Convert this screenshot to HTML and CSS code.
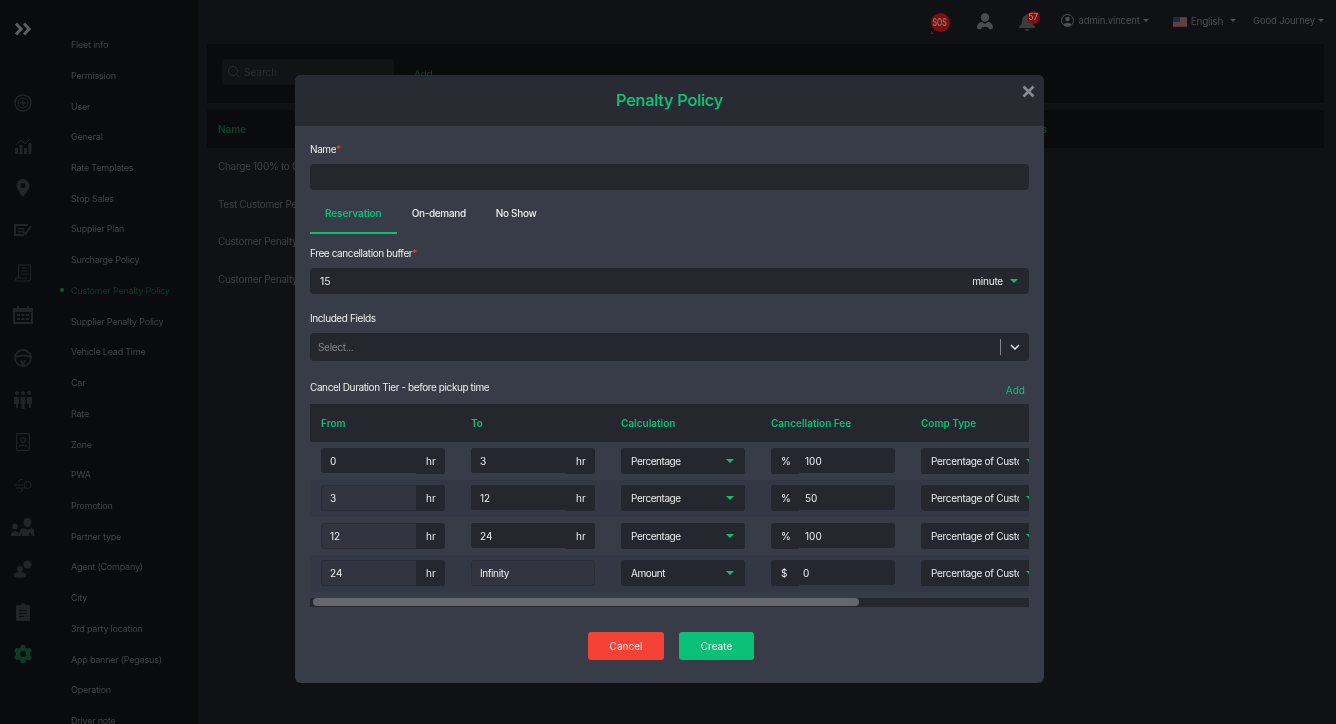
FILE: index.html
```html
<!DOCTYPE html>
<html lang="en">
<head>
<meta charset="utf-8">
<title>Penalty Policy</title>
<link rel="stylesheet" href="styles.css">
</head>
<body>
<div class="app">
  <nav class="rail">
    <div class="rail-top"><svg width="16" height="14" viewBox="0 0 16 14"><path d="M1 1.500 6 7l-5 5.500M9 1.500 14 7l-5 5.500" fill="none" stroke="currentColor" stroke-width="3"/></svg></div>
    <div class="rail-item"><svg width="18" height="18" viewBox="0 0 18 18" fill="none" stroke="currentColor"><circle cx="9" cy="9" r="8" stroke-width="1.500"/><circle cx="9" cy="9" r="5" stroke-width="1"/><path d="M9 6v6M6 9h6" stroke-width="1.500"/></svg></div>
    <div class="rail-item"><svg width="18" height="18" viewBox="0 0 18 18" fill="currentColor"><path d="M1 11h3v6H1zM5.500 8h3v9h-3zM10 11h3v6h-3zM14.500 6h3v11h-3z"/><path d="M2 8 7 3l4 4 5-5" fill="none" stroke="currentColor"/></svg></div>
    <div class="rail-item"><svg width="14" height="18" viewBox="0 0 14 18"><path fill="currentColor" fill-rule="evenodd" d="M7 0a6.500 6.500 0 0 1 6.500 6.500C13.500 11 7 18 7 18S.5 11 .5 6.500A6.500 6.500 0 0 1 7 0Zm0 4a2.500 2.500 0 1 0 0 5 2.500 2.500 0 0 0 0-5Z"/></svg></div>
    <div class="rail-item"><svg width="18" height="14" viewBox="0 0 18 14"><path fill="currentColor" d="M0 1h14v2H2v8h8v2H0zM4 5h6v1.500H4zM4 8h4v1.500H4z"/><path d="m8.500 8 3 3L17 3" fill="none" stroke="currentColor" stroke-width="2"/></svg></div>
    <div class="rail-item"><svg width="16" height="18" viewBox="0 0 16 18" fill="none" stroke="currentColor" stroke-width="1.200"><path d="M3.500 14V1h12v14a2 2 0 0 1-2 2H2.500a2 2 0 0 1-2-2v-1h11v1"/><path d="M6 4h7M6 7h7M6 10h7"/></svg></div>
    <div class="rail-item"><svg width="20" height="18" viewBox="0 0 20 18"><path fill="currentColor" fill-rule="evenodd" d="M4 0h2v2h8V0h2v2h4v16H0V2h4Zm-2 6v10h16V6ZM4 8h3v2H4Zm4.500 0h3v2h-3ZM13 8h3v2h-3Zm-9 4h3v2H4Zm4.500 0h3v2h-3Zm4.500 0h3v2h-3Z"/></svg></div>
    <div class="rail-item"><svg width="18" height="18" viewBox="0 0 18 18" fill="none" stroke="currentColor"><circle cx="9" cy="9" r="8" stroke-width="1.800"/><path d="M1.500 8c5-2 10-2 15 0M7 11l2 5 2-5" stroke-width="2"/></svg></div>
    <div class="rail-item"><svg width="18" height="18" viewBox="0 0 18 18" fill="currentColor"><circle cx="3" cy="2" r="2"/><circle cx="9" cy="2" r="2"/><circle cx="15" cy="2" r="2"/><path d="M0 6h5v7H4v4H2v-4H0zM6.500 6h5v7h-1v5h-3v-5h-1zM13 6h5v7h-1v4h-2v-4h-2z"/></svg></div>
    <div class="rail-item"><svg width="14" height="18" viewBox="0 0 14 18" fill="none" stroke="currentColor" stroke-width="1.200"><rect x=".7" y=".7" width="12.600" height="16.600" rx="1"/><circle cx="7" cy="7" r="2.300"/><path d="M3.500 14v-1.500h7V14"/></svg></div>
    <div class="rail-item"><svg width="18" height="18" viewBox="0 0 18 18" fill="none" stroke="currentColor"><circle cx="13.500" cy="9" r="3.500"/><path d="M1 9h8M2 12h9M5 6c0-3 3-3 4-2M4 15c2 2 5 1 4-2"/></svg></div>
    <div class="rail-item"><svg width="24" height="18" viewBox="0 0 24 18" fill="currentColor"><ellipse cx="16.500" cy="4.500" rx="4" ry="4.500"/><ellipse cx="4" cy="8.500" rx="2.800" ry="3"/><path d="M0 18v-3l3-2h2l3 2 2-4 3-1 3.500 2 4-2 2 1 1 7H21l-1-3h-2v3h-7v-3l-2 3z"/></svg></div>
    <div class="rail-item"><svg width="18" height="18" viewBox="0 0 18 18" fill="currentColor"><circle cx="13.500" cy="4.500" r="4"/><circle cx="6" cy="9" r="3"/><path d="M0 17v-2c0-2 3-3 6-3s6 1 6 3v2c-3 1-9 1-12 0Z"/></svg></div>
    <div class="rail-item"><svg width="14" height="18" viewBox="0 0 14 18"><path fill="currentColor" fill-rule="evenodd" d="M1 2h3.500a2.500 2 0 0 1 5 0H13a1 1 0 0 1 1 1v14a1 1 0 0 1-1 1H1a1 1 0 0 1-1-1V3a1 1 0 0 1 1-1Zm2 5v1h8V7Zm0 3v1h8v-1Zm0 3v1h5v-1Z"/></svg></div>
    <div class="rail-item rail-active"><svg width="18" height="18" viewBox="0 0 18 18"><path fill="currentColor" fill-rule="evenodd" d="m7 0 4 0 .6 2.500 1.800 1 2.500-.8 2 3.400-1.900 1.800v2.200l1.900 1.800-2 3.400-2.500-.8-1.800 1L11 18H7l-.6-2.500-1.800-1-2.500.8-2-3.400 1.900-1.800V7.900L.1 6.100l2-3.400 2.500.8 1.800-1ZM9 6a3 3 0 1 0 0 6 3 3 0 0 0 0-6Z"/></svg></div>
  </nav>

  <aside class="subnav">
    <a class="sub-item">Fleet info</a>
    <a class="sub-item">Permission</a>
    <a class="sub-item">User</a>
    <a class="sub-item">General</a>
    <a class="sub-item">Rate Templates</a>
    <a class="sub-item">Stop Sales</a>
    <a class="sub-item">Supplier Plan</a>
    <a class="sub-item">Surcharge Policy</a>
    <a class="sub-item sub-active">Customer Penalty Policy</a>
    <a class="sub-item">Supplier Penalty Policy</a>
    <a class="sub-item">Vehicle Lead Time</a>
    <a class="sub-item">Car</a>
    <a class="sub-item">Rate</a>
    <a class="sub-item">Zone</a>
    <a class="sub-item">PWA</a>
    <a class="sub-item">Promotion</a>
    <a class="sub-item">Partner type</a>
    <a class="sub-item">Agent (Company)</a>
    <a class="sub-item">City</a>
    <a class="sub-item">3rd party location</a>
    <a class="sub-item">App banner (Pegasus)</a>
    <a class="sub-item">Operation</a>
    <a class="sub-item">Driver note</a>
  </aside>

  <main class="content">
    <header class="topbar">
      <span class="sos"><span class="sos-text">SOS</span></span>
      <svg class="top-user" width="16" height="17" viewBox="0 0 16 17" fill="currentColor"><circle cx="8" cy="4.500" r="4.200"/><path d="M0 14c0-3 3-5 5-5l3 2 3-2c2 0 5 2 5 5v1c-2 2-4 1-4 1-1-3-7-3-8 0 0 0-2 1-4-1z"/></svg>
      <span class="bell">
        <svg width="16" height="18" viewBox="0 0 16 18" fill="currentColor"><path d="M8 1a1.500 1.500 0 0 1 1.500 1.500C12 3 13 5.500 13 8c0 3 1 4 3 5.500V15H0v-1.500C2 12 3 11 3 8c0-2.500 1-5 3.500-5.500A1.500 1.500 0 0 1 8 1ZM6 16h4a2 2 0 0 1-4 0Z"/></svg>
        <span class="badge">57</span>
      </span>
      <svg class="top-account" width="13" height="13" viewBox="0 0 13 13"><circle cx="6.500" cy="6.500" r="6" fill="none" stroke="currentColor"/><circle cx="6.500" cy="5" r="2.300" fill="currentColor"/><path d="M2.500 10.500c1-2 7-2 8 0-2 2-6 2-8 0Z" fill="currentColor"/></svg>
      <span class="top-text top-admin">admin.vincent</span><i class="top-caret"></i>
      <svg class="flag" width="14" height="10" viewBox="0 0 14 10"><rect width="14" height="10" fill="#5a3234"/><path d="M0 2h14M0 4h14M0 6h14M0 8h14" stroke="#5c5c60" stroke-width=".8"/><rect width="7" height="5" fill="#1f2a4a"/></svg>
      <span class="top-text top-lang">English</span><i class="top-caret top-caret-lang"></i>
      <span class="top-text top-journey">Good Journey</span><i class="top-caret"></i>
    </header>

    <section class="search-panel">
      <div class="search-box">
        <svg width="12" height="12" viewBox="0 0 12 12" fill="none" stroke="currentColor"><circle cx="5" cy="5" r="4.500"/><path d="m8.300 8.300 3.200 3.200"/></svg>
        <span>Search</span>
      </div>
      <span class="search-add">Add</span>
    </section>

    <section class="bg-table">
      <div class="bg-head"><span>Name</span><span class="bg-head-end">Actions</span></div>
      <div class="bg-row">Charge 100% to Customer</div>
      <div class="bg-row">Test Customer Penalty</div>
      <div class="bg-row">Customer Penalty Policy</div>
      <div class="bg-row">Customer Penalty Policy</div>
    </section>
  </main>
</div>

<div class="overlay">
  <div class="modal">
    <div class="modal-head">
      <h2 class="modal-title">Penalty Policy</h2>
      <svg class="modal-close" width="13" height="13" viewBox="0 0 13 13"><path d="m1.500 1.500 10 10m0-10-10 10" stroke="currentColor" stroke-width="2.800"/></svg>
    </div>
    <div class="modal-body">
      <label class="label">Name<em>*</em></label>
      <div class="field"></div>

      <div class="tabs">
        <span class="tab tab-active">Reservation</span>
        <span class="tab">On-demand</span>
        <span class="tab">No Show</span>
      </div>

      <label class="label">Free cancellation buffer<em>*</em></label>
      <div class="field field-buffer">
        <span>15</span>
        <span class="unit">minute<i class="caret"></i></span>
      </div>

      <label class="label label-next">Included Fields</label>
      <div class="field field-select">
        <span class="placeholder">Select...</span>
        <span class="sep"></span>
        <svg width="10" height="6" viewBox="0 0 10 6"><path d="m1 1 4 4 4-4" fill="none" stroke="currentColor" stroke-width="1.500"/></svg>
      </div>

      <div class="tier-head">
        <span class="label">Cancel Duration Tier - before pickup time</span>
        <span class="tier-add">Add</span>
      </div>

      <div class="tier">
        <div class="tier-row tier-header">
          <span>From</span><span>To</span><span>Calculation</span><span>Cancellation Fee</span><span>Comp Type</span>
        </div>

        <div class="tier-row">
          <div class="group"><span class="in">0</span><span class="add">hr</span></div>
          <div class="group"><span class="in">3</span><span class="add">hr</span></div>
          <div class="sel">Percentage<i class="caret"></i></div>
          <div class="group"><span class="pre">%</span><span class="in in-fee">100</span></div>
          <div class="sel sel-comp"><span class="sel-clip">Percentage of Customer</span><i class="caret"></i></div>
        </div>

        <div class="tier-row tier-stripe">
          <div class="group"><span class="in in-off">3</span><span class="add">hr</span></div>
          <div class="group"><span class="in">12</span><span class="add">hr</span></div>
          <div class="sel">Percentage<i class="caret"></i></div>
          <div class="group"><span class="pre">%</span><span class="in in-fee">50</span></div>
          <div class="sel sel-comp"><span class="sel-clip">Percentage of Customer</span><i class="caret"></i></div>
        </div>

        <div class="tier-row">
          <div class="group"><span class="in in-off">12</span><span class="add">hr</span></div>
          <div class="group"><span class="in">24</span><span class="add">hr</span></div>
          <div class="sel">Percentage<i class="caret"></i></div>
          <div class="group"><span class="pre">%</span><span class="in in-fee">100</span></div>
          <div class="sel sel-comp"><span class="sel-clip">Percentage of Customer</span><i class="caret"></i></div>
        </div>

        <div class="tier-row tier-stripe">
          <div class="group"><span class="in in-off">24</span><span class="add">hr</span></div>
          <div class="group"><span class="in in-off in-full">Infinity</span></div>
          <div class="sel">Amount<i class="caret"></i></div>
          <div class="group"><span class="pre">$</span><span class="in in-fee in-zero">0</span></div>
          <div class="sel sel-comp"><span class="sel-clip">Percentage of Customer</span><i class="caret"></i></div>
        </div>
      </div>

      <div class="scroll-track"><div class="scroll-thumb"></div></div>

      <div class="actions">
        <button class="btn btn-cancel" type="button">Cancel</button>
        <button class="btn btn-create" type="button">Create</button>
      </div>
    </div>
  </div>
</div>
</body>
</html>
```

FILE: styles.css
```css
* { box-sizing: border-box; }
html, body { margin: 0; height: 100%; overflow: hidden; }
body {
  background: #0f1114;
  font-family: Inter, "Liberation Sans", sans-serif;
  font-size: 10px;
  color: #fff;
}

/* Dimmed page behind the dialog */
.app { display: flex; height: 724px; overflow: hidden; filter: blur(.4px); }

.rail { width: 50px; flex: none; background: #0a0b0d; color: #232426; display: flex; flex-direction: column; align-items: center; padding-right: 4px; }
.rail-top { height: 82px; padding-top: 22px; color: #5c5d5f; flex: none; }
.rail-top svg { display: block; }
.rail-item { height: 42.4px; flex: none; display: flex; align-items: center; justify-content: center; }
.rail-active { color: #0b3d26; }

.subnav { width: 148px; flex: none; background: #0a0b0d; padding: 29.3px 0 0 21px; display: flex; flex-direction: column; }
.sub-item { height: 30.72px; flex: none; display: flex; align-items: center; color: #434446; font-size: 9px; letter-spacing: -.22px; white-space: nowrap; position: relative; }
.sub-active { color: #0b3d26; }
.sub-active::before { content: ""; position: absolute; left: -11px; top: 13px; width: 4px; height: 4px; border-radius: 50%; background: #0c5a36; }

.content { flex: 1; min-width: 0; padding: 0 12px 0 9px; display: flex; flex-direction: column; }

.topbar { height: 44px; flex: none; display: flex; align-items: center; justify-content: flex-end; color: #555658; }
.sos { width: 19px; height: 19px; border-radius: 50%; background: #7d0f0f; margin-right: 27px; position: relative; display: flex; align-items: center; justify-content: center; }
.sos::after { content: ""; position: absolute; left: 0; bottom: -2px; border: 3px solid transparent; border-left-color: #7d0f0f; border-bottom: 0; }
.sos-text { color: #8a6e6e; font: 700 11px/19px "Liberation Sans", sans-serif; transform: scaleX(.62); }
.top-user { margin-right: 26px; margin-bottom: 1px; color: #4b4c4e; }
.bell { position: relative; display: flex; color: #3c3d3f; margin-right: 26px; }
.badge { position: absolute; left: 8px; top: -2px; width: 13px; height: 13px; border-radius: 50%; background: #7d0f0f; color: #a89090; font-size: 8.500px; font-weight: 500; letter-spacing: -.2px; line-height: 13px; text-align: center; }
.top-account { margin-right: 5px; margin-bottom: 4px; color: #4f5052; }
.top-text { font-size: 9.500px; letter-spacing: -.15px; color: #4d4e50; white-space: nowrap; }
.top-admin, .top-journey { margin-bottom: 3px; }
.top-caret { width: 0; height: 0; border: 3px solid transparent; border-top-color: #4d4e50; border-bottom: 0; margin: 0 0 3px 3px; }
.flag { margin-left: 24px; margin-right: 4px; }
.top-lang { font-size: 10px; letter-spacing: -.25px; margin-bottom: 2px; }
.top-caret-lang { margin-left: 7px; margin-right: 17px; }

.search-panel { height: 59px; flex: none; background: #0a0b0d; display: flex; align-items: center; padding-left: 15px; }
.search-box { width: 172px; height: 26px; border-radius: 3px; background: #111315; color: #2c2d2f; display: flex; align-items: center; gap: 4px; padding-left: 6px; font-size: 10px; margin-bottom: 3px; }
.search-add { margin-left: 20px; margin-top: 1px; color: #0c432a; font-size: 10px; letter-spacing: -.3px; }

.bg-table { margin-top: 7px; }
.bg-head { height: 37.5px; background: #0a0b0d; display: flex; justify-content: space-between; align-items: center; padding: 0 277px 0 11px; color: #0c432a; font-weight: 600; font-size: 10px; }
.bg-row { height: 37.5px; display: flex; align-items: center; padding-left: 11px; color: #3f4042; font-size: 10px; letter-spacing: -.3px; white-space: nowrap; }

/* Dialog */
.overlay { position: fixed; inset: 0; display: flex; justify-content: flex-start; padding: 75px 0 0 295px; }
.modal { width: 749px; height: 608px; border-radius: 6px; background: #383c47; overflow: hidden; display: flex; flex-direction: column; filter: blur(.25px); }
.modal-head { height: 51px; flex: none; background: #282b32; display: flex; align-items: center; justify-content: center; position: relative; }
.modal-title { margin: -2px 0 0; color: #0cc47c; font-size: 16.500px; font-weight: 500; letter-spacing: -.3px; }
.modal-close { position: absolute; right: 9px; top: 10px; color: #888a8f; }

.modal-body { flex: 1; padding: 15px 15px 0; display: flex; flex-direction: column; }
.label { display: block; height: 15px; line-height: 17px; font-size: 10px; letter-spacing: -.4px; color: #eceded; margin-bottom: 8px; flex: none; }
.label em { color: #f44336; font-style: normal; }
.field { height: 26px; flex: none; border-radius: 4px; background: #25272f; display: flex; align-items: center; font-size: 10.500px; color: #eceded; }

.tabs { display: flex; height: 44px; flex: none; margin-bottom: 11px; }
.tab { padding: 17px 15px 0; height: 44px; font-size: 10px; font-weight: 500; letter-spacing: -.33px; color: #eceded; }
.tab-active { color: #0abf76; font-weight: 600; letter-spacing: -.1px; border-bottom: 2px solid #0abf76; }

.field-buffer { justify-content: space-between; padding-left: 10px; }
.unit { display: flex; align-items: center; padding-right: 11px; font-size: 10px; letter-spacing: -.2px; }
.unit .caret { margin-left: 7px; }
.label-next { margin-top: 16px; }

.field-select { height: 28px; padding: 0 9px 0 8px; gap: 9px; }
.placeholder { flex: 1; color: #85878c; font-size: 10px; letter-spacing: -.3px; }
.sep { width: 1px; height: 16px; background: #85878c; margin-left: 1px; }
.field-select svg { color: #eceded; }

.tier-head { display: flex; justify-content: space-between; height: 25px; flex: none; margin-top: 18px; padding-right: 4px; }
.tier-add { margin-top: 4px; color: #0abf76; font-size: 10px; line-height: 15px; }

.tier { overflow: hidden; flex: none; }
.tier-row { display: grid; grid-template-columns: repeat(5, 150px); height: 37.500px; align-items: center; padding-left: 11px; width: 800px; font-size: 10px; color: #eceded; }
.tier-header { height: 38px; background: #25272f; color: #0abf76; font-weight: 600; }
.tier-stripe { background: #343844; }

.group { width: 124px; height: 26px; display: flex; align-items: flex-start; }
.in { flex: 1; height: 25px; line-height: 27px; padding-left: 9px; background: #25272f; border-radius: 3px 0 0 3px; }
.add { width: 29px; height: 26px; line-height: 27px; padding-left: 10px; background: #25272f; border-radius: 0 3px 3px 0; }
.pre { width: 28px; height: 26px; line-height: 27px; padding-left: 10px; background: #25272f; border-radius: 3px 0 0 3px; }
.in-fee { padding-left: 6px; border-radius: 0 3px 3px 0; }
.in-zero { padding-left: 4px; }
.in-off { background: #32353f; border: 1px solid #2b2e36; border-right: 0; line-height: 25px; padding-left: 8px; height: 26px; }
.in-full { border-right: 1px solid #2b2e36; border-radius: 3px; letter-spacing: -.4px; }

.sel { width: 124px; height: 26px; border-radius: 3px; background: #25272f; display: flex; align-items: center; justify-content: space-between; padding: 0 11px 0 10px; letter-spacing: -.45px; }
.sel-comp { padding-right: 0; justify-content: flex-start; letter-spacing: -.3px; }
.sel-clip { width: 88px; overflow: hidden; white-space: nowrap; flex: none; }
.sel-comp .caret { margin-left: 7px; }
.caret { display: block; width: 0; height: 0; flex: none; border: 4px solid transparent; border-top: 4px solid #0abf76; border-bottom: 0; }

.scroll-track { height: 9px; flex: none; margin-top: 6px; background: #25272f; padding-left: 3px; }
.scroll-thumb { width: 546px; height: 8px; border-radius: 4px; background: #64676f; }

.actions { display: flex; justify-content: center; gap: 15px; margin-top: 25px; padding-left: 3px; }
.btn { height: 28px; border: 0; border-radius: 3px; color: #f2f2f2; font: 400 10px Inter, "Liberation Sans", sans-serif; }
.btn-cancel { width: 76px; background: #f44336; }
.btn-create { width: 75px; background: #0abf76; }
```
